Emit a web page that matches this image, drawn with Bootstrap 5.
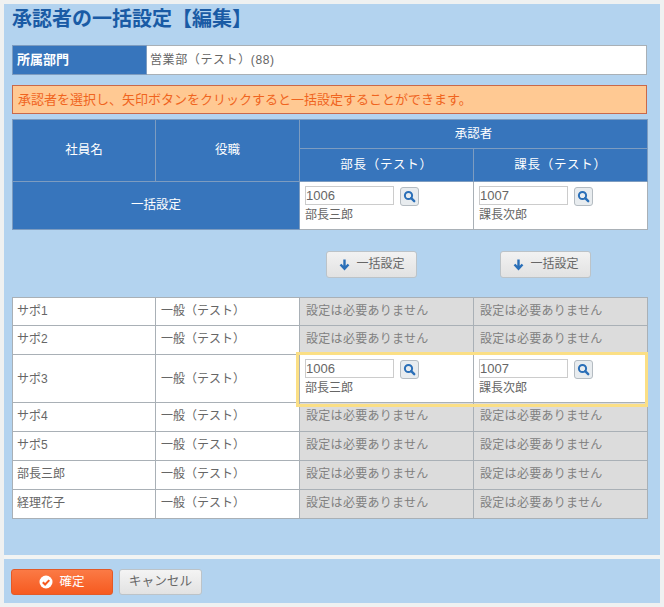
<!DOCTYPE html>
<html lang="ja">
<head>
    <meta charset="UTF-8">
    <meta name="viewport" content="width=device-width, initial-scale=1.0">
    <title>承認者の一括設定【編集】</title>
    <link rel="stylesheet" href="https://cdn.jsdelivr.net/npm/bootstrap@5.3.0/dist/css/bootstrap.min.css">
    <style>
        html, body { height: 100%; }
        body { background: #eff1f1; font-family: "Liberation Sans", "Noto Sans CJK JP", sans-serif; font-size: 12px; color: #666; padding: 4px 4px 4px 4px; }
        .sheet { background: #b3d3ef; height: 599px; display: flex; flex-direction: column; }
        .sheet-main { padding: 0 12px 0 8px; flex: 1; }
        .page-title { font-size: 20px; font-weight: 700; color: #1a5ba5; margin: 0; height: 41px; line-height: 30px; }
        .grid-tbl { table-layout: fixed; width: 635px; margin: 0; border-collapse: collapse; }
        .grid-tbl > tbody > tr > *, .grid-tbl > thead > tr > * { border: 1px solid #a9b0b6; padding: 0 4px; vertical-align: middle; font-size: 12px; font-weight: 400; color: #666; background: #fff; box-shadow: none; }
        .grid-tbl > thead > tr > .head-cell, .grid-tbl > tbody > tr > .head-cell { background: #3775bc; color: #fff; text-align: center; border-color: #7d9cc0; font-size: 12.5px; }
        .grid-tbl > thead > tr > .sub-head { letter-spacing: .7px; }
        .grid-tbl > tbody > .plain-row > * { padding-bottom: 2px; }
        .grid-tbl > tbody > tr > .off-cell { background: #dcdcdc; color: #808080; padding-left: 6px; letter-spacing: .3px; }
        .grid-tbl > tbody > tr > .role-cell { padding-left: 5px; }
        .dept-tbl tr { height: 29px; }
        .grid-tbl.dept-tbl > tbody > tr > .head-cell { text-align: left; font-weight: 700; font-size: 13px; }
        .grid-tbl.dept-tbl > tbody > tr > .dept-val { padding-left: 3px; letter-spacing: .6px; }
        .hint-box { background: #ffc993; border: 1px solid #c9694a; color: #f0641e; font-size: 13px; height: 29px; line-height: 27px; padding: 0 5px; margin: 10px 0 5px; border-radius: 0; width: 635px; }
        .h1-row { height: 29px; }
        .h2-row { height: 33px; }
        .h3-row { height: 48px; }
        .plain-row { height: 29px; }
        .plain-row.first-row { height: 28px; }
        .pick-row { height: 48px; }
        .code-input { width: 89px; height: 19px; border: 1px solid #ccc; border-radius: 0; padding: 0; font-size: 13px; line-height: 17px; color: #666; min-height: 0; }
        .find-btn { width: 19px; height: 19px; padding: 0; border: 1px solid #b5bcc2; border-radius: 3px; background: #e8ecef; display: flex; align-items: center; justify-content: center; margin: 1px 0 0 6px; }
        .picked-name { line-height: 16px; margin-top: 1px; }
        .grid-tbl > tbody > tr > .pick-cell { padding: 4px 5px 0; vertical-align: top; }
        .bulk-row { height: 67px; width: 635px; display: grid; grid-template-columns: 287px 174px 174px; align-items: center; padding-top: 1px; }
        .bulk-btn { width: 91px; height: 27px; padding: 0; margin-left: 27px; font-size: 12px; color: #666; background: linear-gradient(#f2f2f2, #e2e2e2); border: 1px solid #bcc3c8; border-radius: 3px; display: flex; align-items: center; justify-content: center; gap: 5px; }
        .sel-frame { position: absolute; left: 284px; top: 55px; width: 352px; height: 55px; border: 3px solid #fbdf85; pointer-events: none; }
        .rule-line { height: 4px; background: #f2f4f3; margin-top: 0; }
        .foot-bar { height: 44px; padding: 10px 0 0 7px; display: flex; gap: 6px; align-items: flex-start; }
        .ok-btn { width: 102px; height: 26px; padding: 0; background: linear-gradient(#fb7a45, #f65a20); border: 1px solid #e25a28; border-radius: 3px; color: #fff; font-size: 12.5px; display: flex; align-items: center; justify-content: center; gap: 6px; }
        .cancel-btn { width: 83px; height: 26px; padding: 0; background: linear-gradient(#f4f4f4, #e2e2e2); border: 1px solid #bcc3c8; border-radius: 3px; color: #666; font-size: 12.7px; }
    </style>
</head>
<body>
<div class="sheet">
    <div class="sheet-main">
        <h1 class="page-title">承認者の一括設定【編集】</h1>
        <table class="table grid-tbl dept-tbl">
            <colgroup><col style="width:134px"><col></colgroup>
            <tbody>
            <tr><th class="head-cell">所属部門</th><td class="dept-val">営業部（テスト）(88)</td></tr>
            </tbody>
        </table>
        <div class="hint-box">承認者を選択し、矢印ボタンをクリックすると一括設定することができます。</div>
        <table class="table grid-tbl">
            <colgroup><col style="width:143px"><col style="width:144px"><col style="width:174px"><col style="width:174px"></colgroup>
            <thead>
            <tr class="h1-row">
                <th class="head-cell" rowspan="2">社員名</th>
                <th class="head-cell" rowspan="2">役職</th>
                <th class="head-cell" colspan="2">承認者</th>
            </tr>
            <tr class="h2-row">
                <th class="head-cell sub-head">部長（テスト）</th>
                <th class="head-cell sub-head">課長（テスト）</th>
            </tr>
            </thead>
            <tbody>
            <tr class="h3-row">
                <td class="head-cell" colspan="2">一括設定</td>
                <td class="pick-cell">
                    <div class="d-flex"><input class="form-control code-input" value="1006"><button class="btn find-btn" type="button"><svg width="13" height="13" viewBox="0 0 13 13"><circle cx="5.5" cy="5.5" r="3.6" fill="none" stroke="#2a6fb8" stroke-width="2"/><path d="M8.2 8.2l3 3" stroke="#2a6fb8" stroke-width="2.4" stroke-linecap="round"/></svg></button></div>
                    <div class="picked-name">部長三郎</div>
                </td>
                <td class="pick-cell">
                    <div class="d-flex"><input class="form-control code-input" value="1007"><button class="btn find-btn" type="button"><svg width="13" height="13" viewBox="0 0 13 13"><circle cx="5.5" cy="5.5" r="3.6" fill="none" stroke="#2a6fb8" stroke-width="2"/><path d="M8.2 8.2l3 3" stroke="#2a6fb8" stroke-width="2.4" stroke-linecap="round"/></svg></button></div>
                    <div class="picked-name">課長次郎</div>
                </td>
            </tr>
            </tbody>
        </table>
        <div class="bulk-row">
            <div></div>
            <div><button class="btn bulk-btn" type="button"><svg width="13" height="13" viewBox="0 0 13 13"><path d="M6.5 1.5v9M2.5 6.5l4 4.2 4-4.2" fill="none" stroke="#2a6fb8" stroke-width="2.4"/></svg>一括設定</button></div>
            <div><button class="btn bulk-btn" type="button"><svg width="13" height="13" viewBox="0 0 13 13"><path d="M6.5 1.5v9M2.5 6.5l4 4.2 4-4.2" fill="none" stroke="#2a6fb8" stroke-width="2.4"/></svg>一括設定</button></div>
        </div>
        <div class="position-relative">
            <table class="table grid-tbl">
                <colgroup><col style="width:143px"><col style="width:144px"><col style="width:174px"><col style="width:174px"></colgroup>
                <tbody>
                <tr class="plain-row first-row"><td>サポ1</td><td class="role-cell">一般（テスト）</td><td class="off-cell">設定は必要ありません</td><td class="off-cell">設定は必要ありません</td></tr>
                <tr class="plain-row"><td>サポ2</td><td class="role-cell">一般（テスト）</td><td class="off-cell">設定は必要ありません</td><td class="off-cell">設定は必要ありません</td></tr>
                <tr class="pick-row">
                    <td>サポ3</td><td class="role-cell">一般（テスト）</td>
                    <td class="pick-cell">
                        <div class="d-flex"><input class="form-control code-input" value="1006"><button class="btn find-btn" type="button"><svg width="13" height="13" viewBox="0 0 13 13"><circle cx="5.5" cy="5.5" r="3.6" fill="none" stroke="#2a6fb8" stroke-width="2"/><path d="M8.2 8.2l3 3" stroke="#2a6fb8" stroke-width="2.4" stroke-linecap="round"/></svg></button></div>
                        <div class="picked-name">部長三郎</div>
                    </td>
                    <td class="pick-cell">
                        <div class="d-flex"><input class="form-control code-input" value="1007"><button class="btn find-btn" type="button"><svg width="13" height="13" viewBox="0 0 13 13"><circle cx="5.5" cy="5.5" r="3.6" fill="none" stroke="#2a6fb8" stroke-width="2"/><path d="M8.2 8.2l3 3" stroke="#2a6fb8" stroke-width="2.4" stroke-linecap="round"/></svg></button></div>
                        <div class="picked-name">課長次郎</div>
                    </td>
                </tr>
                <tr class="plain-row"><td>サポ4</td><td class="role-cell">一般（テスト）</td><td class="off-cell">設定は必要ありません</td><td class="off-cell">設定は必要ありません</td></tr>
                <tr class="plain-row"><td>サポ5</td><td class="role-cell">一般（テスト）</td><td class="off-cell">設定は必要ありません</td><td class="off-cell">設定は必要ありません</td></tr>
                <tr class="plain-row"><td>部長三郎</td><td class="role-cell">一般（テスト）</td><td class="off-cell">設定は必要ありません</td><td class="off-cell">設定は必要ありません</td></tr>
                <tr class="plain-row"><td>経理花子</td><td class="role-cell">一般（テスト）</td><td class="off-cell">設定は必要ありません</td><td class="off-cell">設定は必要ありません</td></tr>
                </tbody>
            </table>
            <div class="sel-frame"></div>
        </div>
    </div>
    <div class="rule-line"></div>
    <div class="foot-bar">
        <button class="btn ok-btn" type="button"><svg width="14" height="14" viewBox="0 0 14 14"><circle cx="7" cy="7" r="6.5" fill="#fff"/><path d="M3.8 7.2l2.3 2.3 4.2-4.4" fill="none" stroke="#f65a20" stroke-width="2"/></svg>確定</button>
        <button class="btn cancel-btn" type="button">キャンセル</button>
    </div>
</div>
<script src="https://cdn.jsdelivr.net/npm/bootstrap@5.3.0/dist/js/bootstrap.bundle.min.js"></script>
</body>
</html>
